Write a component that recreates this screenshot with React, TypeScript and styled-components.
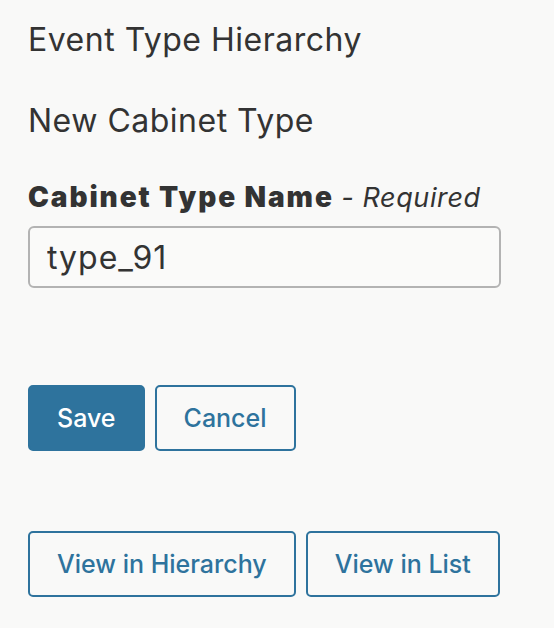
import { FC } from "react";
import styled, { createGlobalStyle } from "styled-components";

const GlobalStyle = createGlobalStyle`
  html, body {
    margin: 0;
    padding: 0;
    background: #f9f9f8;
  }
  body {
    font-family: Inter, "Noto Sans", sans-serif;
    color: #333333;
  }
`;

const App: FC = () => {
  return (
    <>
      <GlobalStyle />
      <Page>
        <Title>Event Type Hierarchy</Title>
        <SubTitle>New Cabinet Type</SubTitle>
        <Field>
          <Label>
            Cabinet Type Name <Hint>- Required</Hint>
          </Label>
          <TextInput defaultValue="type_91" />
        </Field>
        <ButtonRow $top={97}>
          <Button $primary>Save</Button>
          <Button>Cancel</Button>
        </ButtonRow>
        <ButtonRow $top={80}>
          <Button>View in Hierarchy</Button>
          <Button>View in List</Button>
        </ButtonRow>
      </Page>
    </>
  );
};

const Page = styled.div`
  display: flex;
  flex-direction: column;
  align-items: flex-start;
  padding: 20px 0 0 28px;
`;

const Title = styled.h1`
  margin: 0;
  font-size: 32px;
  font-weight: 400;
  line-height: 40px;
  letter-spacing: 0.5px;
`;

const SubTitle = styled.h2`
  margin: 41px 0 0;
  font-size: 32px;
  font-weight: 400;
  line-height: 40px;
  letter-spacing: 0.5px;
`;

const Field = styled.div`
  display: flex;
  flex-direction: column;
  align-items: flex-start;
  gap: 12px;
  margin-top: 40px;
`;

const Label = styled.label`
  font-size: 28px;
  font-weight: 900;
  line-height: 32px;
  letter-spacing: 1.9px;
`;

const Hint = styled.span`
  font-size: 27px;
  font-weight: 400;
  font-style: italic;
  letter-spacing: 0.6px;
`;

const TextInput = styled.input`
  box-sizing: border-box;
  width: 473px;
  height: 62px;
  padding: 0 17px;
  border: 2px solid #b3b3b3;
  border-radius: 6px;
  background: #fafaf9;
  font-family: inherit;
  font-size: 32px;
  letter-spacing: 1px;
  color: #333333;
  outline: none;
`;

const ButtonRow = styled.div<{ $top: number }>`
  display: flex;
  gap: 10px;
  margin-top: ${({ $top }) => $top}px;
`;

const Button = styled.button<{ $primary?: boolean }>`
  box-sizing: border-box;
  height: 66px;
  padding: 0 27px;
  border: 2px solid #2e739d;
  border-radius: 5px;
  background: ${({ $primary }) => ($primary ? "#2e739d" : "transparent")};
  color: ${({ $primary }) => ($primary ? "#ffffff" : "#2e739d")};
  font-family: inherit;
  font-size: 25px;
  font-weight: 500;
  cursor: pointer;
`;

export default App;
